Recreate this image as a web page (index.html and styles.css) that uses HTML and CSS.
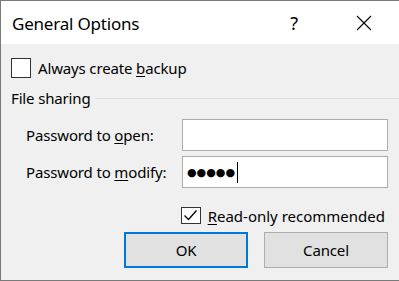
FILE: index.html
```html
<!DOCTYPE html>
<html>
<head>
    <meta charset="utf-8"/>
    <title>General Options</title>
    <link rel="stylesheet" href="styles.css">
</head>
<body>
<div class="window">
    <div class="titlebar">
        <span class="title">General Options</span>
        <span class="help">?</span>
        <span class="close">
            <svg width="16" height="16" viewBox="0 0 16 16"><path d="M1 1L15 15M15 1L1 15" stroke="#000" stroke-width="1.1" fill="none"/></svg>
        </span>
    </div>
    <div class="content">
        <label class="check row-backup">
            <span class="box"></span>
            <span>Always create <u>b</u>ackup</span>
        </label>
        <div class="group">
            <span class="group-title">File sharing</span>
            <span class="rule"></span>
        </div>
        <div class="field">
            <span class="label">Password to <u>o</u>pen:</span>
            <div class="input"></div>
        </div>
        <div class="field">
            <span class="label">Password to <u>m</u>odify:</span>
            <div class="input"><span class="dots">●●●●●</span><span class="caret"></span></div>
        </div>
        <label class="check row-readonly">
            <span class="box">
                <svg width="17" height="17" viewBox="0 0 17 17"><path d="M2.5 8.5L6.5 12.5L14.5 3.5" stroke="#000" stroke-width="1.3" fill="none"/></svg>
            </span>
            <span><u>R</u>ead-only recommended</span>
        </label>
        <div class="buttons">
            <div class="btn default">OK</div>
            <div class="btn">Cancel</div>
        </div>
    </div>
</div>
</body>
</html>
```
FILE: styles.css
```css
* {
    margin: 0;
    padding: 0;
    box-sizing: border-box;
}

body {
    background: #f0f0f0;
    font-family: "Noto Sans", "Open Sans", sans-serif;
    font-size: 15px;
    letter-spacing: -0.15px;
    color: #000;
}

.window {
    width: 399px;
    height: 281px;
    border: 1px solid #7a7a7a;
    border-right: none;
    background: #f0f0f0;
    display: flex;
    flex-direction: column;
}

.titlebar {
    height: 43px;
    background: #fff;
    display: flex;
    align-items: center;
    flex-shrink: 0;
    padding-top: 1px;
}

.title {
    font-size: 17px;
    letter-spacing: -0.2px;
    padding-left: 11px;
    flex: 1;
}

.help {
    font-size: 18px;
    width: 20px;
    margin-right: 52px;
    text-align: center;
}

.close {
    width: 16px;
    height: 16px;
    margin-right: 27px;
    display: flex;
}

.content {
    flex: 1;
    display: flex;
    flex-direction: column;
    padding: 14px 11px 0 10px;
}

.check {
    display: flex;
    align-items: center;
    height: 20px;
}

.box {
    width: 20px;
    height: 20px;
    border: 1px solid #333;
    background: #fff;
    display: flex;
    align-items: center;
    justify-content: center;
    margin-right: 7px;
}

.group {
    display: flex;
    align-items: center;
    margin-top: 8px;
    height: 24px;
    margin-right: -11px;
}

.group-title {
    margin-right: 4px;
}

.rule {
    flex: 1;
    height: 1px;
    background: #dcdcdc;
    margin-top: 1px;
}

.field {
    display: flex;
    align-items: center;
    height: 32px;
    margin-top: 5px;
    padding-left: 15px;
}

.group + .field {
    margin-top: 9px;
}

.label {
    width: 156px;
}

.input {
    flex: 1;
    height: 32px;
    border: 1px solid #adadad;
    background: #fff;
    display: flex;
    align-items: center;
    padding-left: 4px;
}

.dots {
    font-family: "DejaVu Sans", sans-serif;
    font-size: 11px;
    letter-spacing: 0;
}

.caret {
    width: 1px;
    height: 21px;
    background: #000;
    margin-left: 2px;
}

.row-readonly {
    margin-top: 19px;
    align-self: flex-end;
    margin-right: 3px;
    height: 17px;
    letter-spacing: 0;
}

.row-readonly .box {
    width: 20px;
    height: 17px;
}

.buttons {
    display: flex;
    justify-content: flex-end;
    gap: 16px;
    margin-top: 8px;
}

.btn {
    width: 124px;
    height: 36px;
    background: #e1e1e1;
    border: 1px solid #adadad;
    display: flex;
    align-items: center;
    justify-content: center;
}

.btn.default {
    border: 2px solid #0078d7;
}

u {
    text-decoration: underline;
    text-underline-offset: 2px;
}
```
